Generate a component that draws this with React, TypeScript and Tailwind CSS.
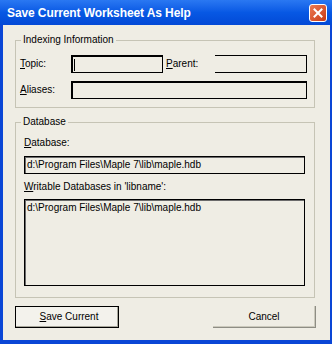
import React from 'react';

const font = { fontFamily: '"Liberation Sans", Arial, sans-serif' };

const Field: React.FC<{ className?: string; children?: React.ReactNode }> = ({ className = '', children }) => (
  <div className={`h-[18px] border-t-2 border-l-2 border-r border-b border-black flex items-center ${className}`}>
    {children}
  </div>
);

const App: React.FC = () => {
  return (
    <div className="w-[332px] h-[344px] bg-[#0a46d6] flex flex-col text-black" style={font}>
      {/* title bar */}
      <div className="h-[25px] shrink-0 flex items-center justify-between pl-[7px] pr-[5px] bg-gradient-to-b from-[#2a78f2] via-[#0758e4] to-[#0349d6]">
        <span className="text-white font-bold text-[12px] tracking-[-0.1px] leading-none">Save Current Worksheet As Help</span>
        <div className="w-[18px] h-[18px] rounded-[3px] border border-white bg-gradient-to-br from-[#ec7a52] to-[#c8380f] flex items-center justify-center">
          <svg width="10" height="10" viewBox="0 0 10 10">
            <path d="M1.5 1.5 L8.5 8.5 M8.5 1.5 L1.5 8.5" stroke="white" strokeWidth="2" strokeLinecap="square" />
          </svg>
        </div>
      </div>

      {/* body */}
      <div className="flex-1 ml-[3px] mr-[2px] mb-[4px] bg-[#efede4] px-[12px] pt-[15px] flex flex-col text-[10px] leading-[12px]">
        {/* Indexing Information */}
        <div className="relative w-[300px] h-[68px] border border-[#c6c4b5] px-[4px] pt-[14px]">
          <span className="absolute -top-[7px] left-[5px] px-[2px] bg-[#efede4]">Indexing Information</span>
          <div className="flex items-center">
            <span className="w-[51px]"><span className="underline">T</span>opic:</span>
            <Field className="w-[92px]">
              <div className="ml-[1px] w-px h-[12px] bg-black" />
            </Field>
            <span className="w-[49px] ml-[3px]"><span className="underline">P</span>arent:</span>
            <div className="w-[92px] h-[18px] border-t border-b border-r border-black" />
          </div>
          <div className="flex items-center mt-[8px]">
            <span className="w-[51px]"><span className="underline">A</span>liases:</span>
            <Field className="w-[236px]" />
          </div>
        </div>

        {/* Database */}
        <div className="relative w-[300px] h-[176px] mt-[14px] border border-[#c6c4b5] px-[8px] pt-[14px] flex flex-col">
          <span className="absolute -top-[7px] left-[5px] px-[2px] bg-[#efede4]">Database</span>
          <span><span className="underline">D</span>atabase:</span>
          <div className="w-[281px] h-[18px] mt-[7px] pl-[2px] border border-black shadow-[inset_1px_1px_0_#6b6b6b] flex items-center">
            d:\Program Files\Maple 7\lib\maple.hdb
          </div>
          <span className="mt-[7px]"><span className="underline">W</span>ritable Databases in 'libname':</span>
          <div className="w-[281px] h-[87px] mt-[6px] border border-black shadow-[inset_1px_1px_0_#6b6b6b] pl-[2px] pt-[2px]">
            d:\Program Files\Maple 7\lib\maple.hdb
          </div>
        </div>

        {/* buttons */}
        <div className="w-[301px] mt-[8px] flex justify-between">
          <button className="w-[104px] h-[22px] border border-black bg-[#f3f2ec] shadow-[inset_-1px_-1px_0_#a7a69a] text-[10px] pl-[4px]">
            <span className="underline">S</span>ave Current
          </button>
          <button className="w-[103px] h-[22px] bg-[#efede4] border-r border-b border-[#8e8d84] shadow-[inset_-1px_-1px_0_#cbc9bc] text-[10px]">
            Cancel
          </button>
        </div>
      </div>
    </div>
  );
};

export default App;
